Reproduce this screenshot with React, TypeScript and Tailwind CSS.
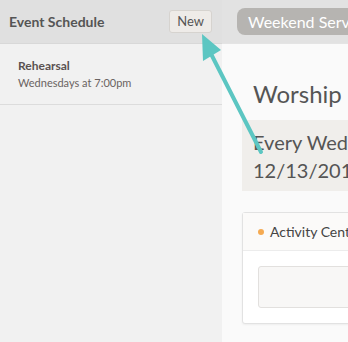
export default function App() {
  return (
    <div className="relative flex h-[342px] w-[348px] overflow-hidden bg-[#fafafa] font-['Lato','Noto_Sans',sans-serif] text-[#555]">
      <aside className="flex w-[222px] shrink-0 flex-col bg-[#f1f1f1]">
        <div className="flex h-[44px] items-center justify-between border-b border-[#d8d8d8] bg-[#e0e0e0] pl-[9px] pr-[10px]">
          <div className="text-[14px] font-bold text-[#555]">Event Schedule</div>
          <button className="h-[23px] rounded-[3px] border border-[#d6d3cf] bg-[#eeebe8] px-[7px] text-[13px] text-[#555]">
            New
          </button>
        </div>
        <div className="border-b border-[#dcdcdc] px-[18px] pb-[13px] pt-[13px]">
          <div className="text-[12px] font-bold leading-[18px] text-[#5a5150]">Rehearsal</div>
          <div className="text-[11px] leading-[16px] text-[#6a6361]">Wednesdays at 7:00pm</div>
        </div>
      </aside>

      <main className="flex min-w-0 flex-1 flex-col">
        <div className="flex h-[44px] shrink-0 items-center border-b border-[#e4e4e4] bg-[#e2e2e2] pl-[15px]">
          <div className="flex h-[27px] shrink-0 items-center whitespace-nowrap rounded-[8px] bg-[#b6b4b1] px-[11px] text-[16px] text-white">
            Weekend Services
          </div>
        </div>
        <div className="w-[500px] pl-[20px]">
          <h1 className="mt-[35px] pl-[11px] text-[24px] leading-[30px] text-[#555]">Worship Gathering</h1>
          <div className="mt-[11px] h-[71px] bg-[#f0eeeb] pl-[11px] pt-[8px] text-[20px] leading-[28px] text-[#555]">
            <div>Every Wednesday at 7:00pm</div>
            <div>12/13/2017</div>
          </div>
          <div className="mt-[21px] rounded-[3px] border border-[#e2e2e2] bg-white shadow-[0_1px_2px_rgba(0,0,0,0.05)]">
            <div className="flex h-[38px] items-center gap-[6px] border-b border-[#ececec] bg-[#fbfaf9] pl-[15px]">
              <span className="h-[6px] w-[6px] rounded-full bg-[#f5aa52]" />
              <span className="text-[14px] text-[#444]">Activity Center</span>
            </div>
            <div className="px-[15px] py-[15px]">
              <div className="h-[42px] rounded-[3px] border border-[#e2e0de] bg-[#f8f7f6]" />
            </div>
          </div>
        </div>
      </main>

      <svg className="pointer-events-none absolute left-0 top-0" width="348" height="342" viewBox="0 0 348 342">
        <line x1="261" y1="152" x2="207" y2="46" stroke="#5cc6c2" strokeWidth="4" strokeLinecap="round" />
        <polygon points="202,34 203,61 221,50" fill="#5cc6c2" />
      </svg>
    </div>
  );
}
